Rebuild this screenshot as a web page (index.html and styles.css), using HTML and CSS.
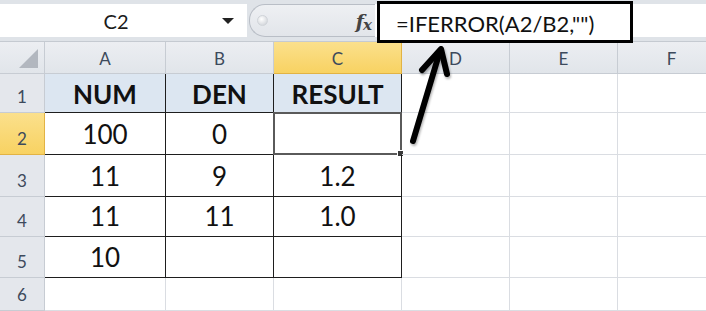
FILE: index.html
```html
<!DOCTYPE html>
<html lang="en">
<head>
  <meta charset="UTF-8">
  <title>IFERROR example</title>
  <link rel="stylesheet" href="styles.css">
</head>
<body>
  <div class="formula-bar">
    <div class="name-box">
      <span class="name">C2</span>
      <span class="drop"></span>
    </div>
    <div class="pill">
      <span class="knob"></span>
      <span class="fx">f<span class="fx-x">x</span></span>
    </div>
    <div class="formula-input"></div>
  </div>

  <div class="sheet">
    <div class="corner"><span class="tri"></span></div>
    <div class="col-head">A</div>
    <div class="col-head">B</div>
    <div class="col-head sel">C</div>
    <div class="col-head">D</div>
    <div class="col-head">E</div>
    <div class="col-head">F</div>

    <div class="row-head">1</div>
    <div class="cell data title">NUM</div>
    <div class="cell data title">DEN</div>
    <div class="cell data title">RESULT</div>
    <div class="cell"></div>
    <div class="cell"></div>
    <div class="cell"></div>

    <div class="row-head sel">2</div>
    <div class="cell data">100</div>
    <div class="cell data">0</div>
    <div class="cell data active"><span class="handle"></span></div>
    <div class="cell"></div>
    <div class="cell"></div>
    <div class="cell"></div>

    <div class="row-head">3</div>
    <div class="cell data">11</div>
    <div class="cell data">9</div>
    <div class="cell data">1.2</div>
    <div class="cell"></div>
    <div class="cell"></div>
    <div class="cell"></div>

    <div class="row-head">4</div>
    <div class="cell data">11</div>
    <div class="cell data">11</div>
    <div class="cell data">1.0</div>
    <div class="cell"></div>
    <div class="cell"></div>
    <div class="cell"></div>

    <div class="row-head">5</div>
    <div class="cell data">10</div>
    <div class="cell data"></div>
    <div class="cell data"></div>
    <div class="cell"></div>
    <div class="cell"></div>
    <div class="cell"></div>

    <div class="row-head">6</div>
    <div class="cell"></div>
    <div class="cell"></div>
    <div class="cell"></div>
    <div class="cell"></div>
    <div class="cell"></div>
    <div class="cell"></div>
  </div>

  <!-- annotation: highlighted formula and arrow -->
  <div class="callout">=IFERROR(A2/B2,"")</div>
  <svg class="arrow" width="60" height="110" viewBox="0 0 60 110">
    <g fill="none" stroke="#000" stroke-width="6" stroke-linecap="round" stroke-linejoin="round">
      <line x1="13" y1="95" x2="40" y2="5"/>
      <polyline points="22,24 41,3 47,28"/>
    </g>
  </svg>
</body>
</html>
```

FILE: styles.css
```css
body {
  margin: 0;
  width: 706px;
  height: 311px;
  overflow: hidden;
  position: relative;
  background: #fff;
  font-family: Lato, 'Liberation Sans', sans-serif;
}
.formula-bar {
  height: 42px;
  display: flex;
  align-items: flex-start;
  background: #dfe3e8;
  border-bottom: 1px solid #c5cad1;
  box-sizing: border-box;
  padding-top: 4px;
}
.name-box {
  width: 247px;
  height: 33px;
  background: #fff;
  display: flex;
  align-items: center;
}
.name {
  flex: 1;
  text-align: center;
  font-size: 20px;
  color: #1b1b1b;
  padding-left: 10px;
}
.drop {
  width: 0;
  height: 0;
  border-left: 6px solid transparent;
  border-right: 6px solid transparent;
  border-top: 6px solid #222;
  margin-right: 13px;
}
.pill {
  width: 126px;
  height: 33px;
  margin-left: 2px;
  border: 1px solid #b9bec6;
  border-right: none;
  border-radius: 16px 0 0 16px;
  background: linear-gradient(#eef0f3, #e2e5ea);
  display: flex;
  align-items: center;
  justify-content: space-between;
  padding: 0 4px 0 7px;
  box-sizing: border-box;
}
.knob {
  width: 9px;
  height: 9px;
  border-radius: 50%;
  background: radial-gradient(circle at 40% 35%, #fff, #c9cdd3);
  border: 1px solid #d0d4d9;
}
.fx {
  font-family: 'DejaVu Serif', serif;
  font-style: italic;
  font-weight: bold;
  font-size: 19px;
  color: #444;
  letter-spacing: -1px;
}
.fx-x {
  font-size: 15px;
  position: relative;
  top: 2px;
}
.formula-input {
  flex: 1;
  height: 33px;
  background: #fff;
}
.sheet {
  display: grid;
  grid-template-columns: 45px 121px 108px 128px 108px 108px 108px;
  grid-template-rows: 32px 39px 42px 42px 40px 41px 33px;
}
.corner,
.col-head,
.row-head {
  background: linear-gradient(#eceef2, #e1e5ea);
  border-right: 1px solid #c7ccd3;
  border-bottom: 1px solid #c7ccd3;
  box-sizing: border-box;
  color: #3d4a5c;
  display: flex;
  justify-content: center;
}
.corner {
  position: relative;
}
.tri {
  position: absolute;
  right: 6px;
  bottom: 5px;
  width: 0;
  height: 0;
  border-left: 19px solid transparent;
  border-bottom: 19px solid #b2b7bf;
}
.col-head {
  align-items: center;
  font-size: 17px;
  padding-top: 2px;
}
.col-head.sel,
.row-head.sel {
  background: linear-gradient(#fbe08c, #f8d262);
  border-bottom-color: #e2b344;
  border-right-color: #e2b344;
}
.row-head {
  align-items: flex-end;
  font-size: 17px;
  padding-bottom: 5px;
  background: #e4e7ec;
}
.cell {
  border-right: 1px solid #dadde2;
  border-bottom: 1px solid #dadde2;
  box-sizing: border-box;
  display: flex;
  align-items: flex-end;
  justify-content: center;
  font-size: 26px;
  padding-bottom: 4px;
  color: #111;
  position: relative;
}
.cell.data {
  border-right-color: #1e1e1e;
  border-bottom-color: #1e1e1e;
}
.cell.title {
  background: #dce6f1;
  font-weight: bold;
  padding-bottom: 2px;
}
.cell.active {
  border: 2px solid #5a5a5a;
  margin: -1px 0 0 -1px;
}
.handle {
  position: absolute;
  right: -4px;
  bottom: -4px;
  width: 5px;
  height: 5px;
  background: #3a3a3a;
  border: 1px solid #fff;
}
.callout {
  position: absolute;
  left: 377px;
  top: 1px;
  width: 256px;
  height: 42px;
  box-sizing: border-box;
  border: 3px solid #000;
  background: #fff;
  font-size: 22px;
  color: #111;
  padding: 6px 0 0 16px;
}
.arrow {
  position: absolute;
  left: 400px;
  top: 46px;
  filter: drop-shadow(1px 2px 1px rgba(0, 0, 0, 0.3));
}
```
